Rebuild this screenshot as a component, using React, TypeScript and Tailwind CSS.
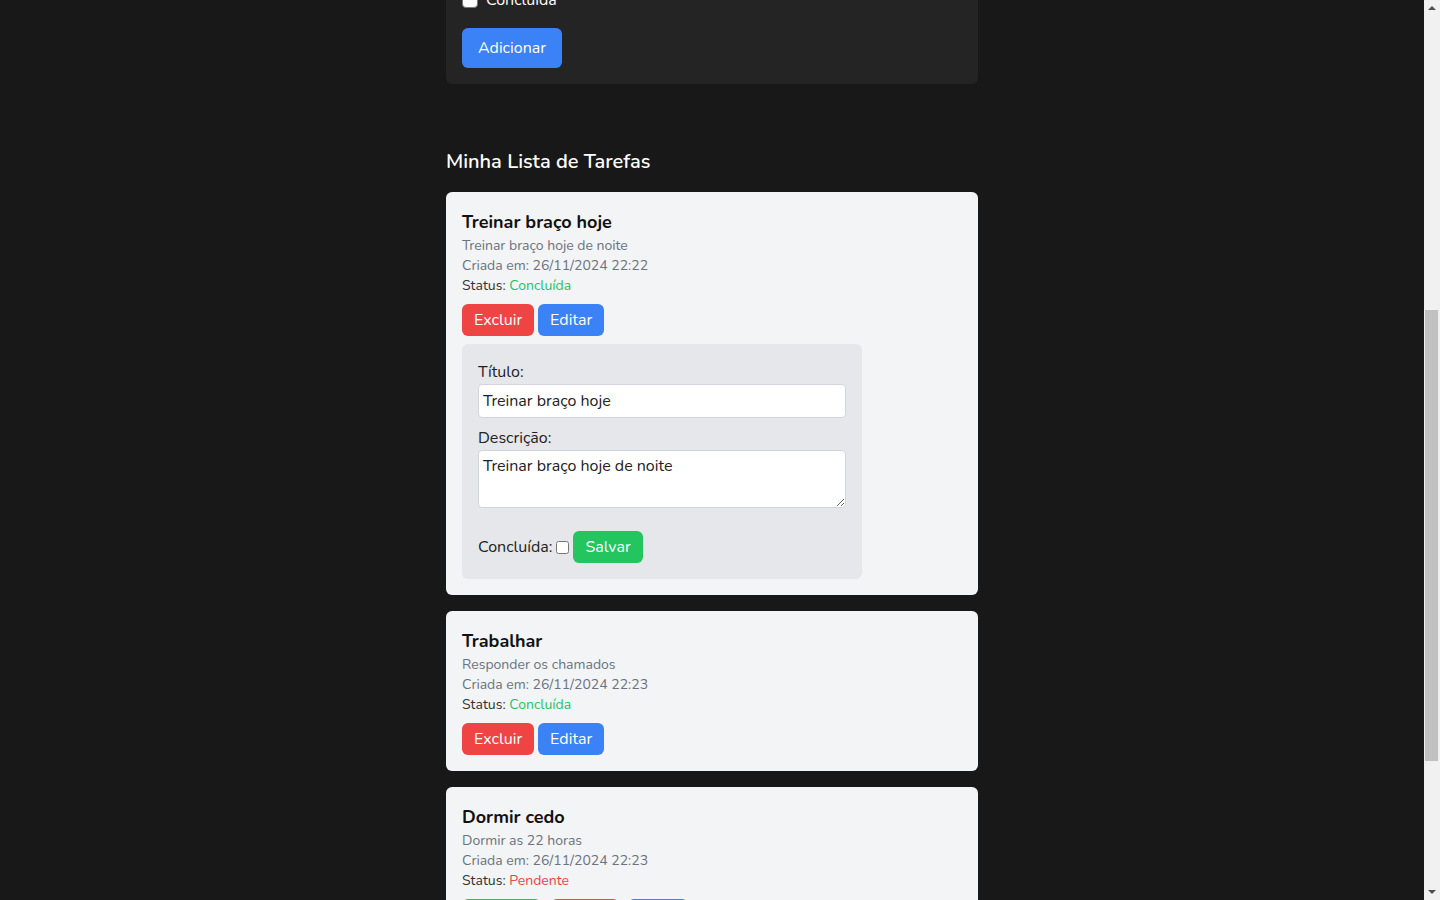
import React from "react";

type Task = {
  id: number;
  title: string;
  description: string;
  createdAt: string;
  done: boolean;
};

const tasks: Task[] = [
  { id: 1, title: "Treinar braço hoje", description: "Treinar braço hoje de noite", createdAt: "26/11/2024 22:22", done: true },
  { id: 2, title: "Trabalhar", description: "Responder os chamados", createdAt: "26/11/2024 22:23", done: true },
  { id: 3, title: "Dormir cedo", description: "Dormir as 22 horas", createdAt: "26/11/2024 22:23", done: false },
];

const font = "font-['Nunito','Lato','Noto_Sans',sans-serif]";

const EditForm = ({ task }: { task: Task }) => (
  <div className="mt-2 w-[400px] rounded-md bg-[#e5e7eb] p-4 text-base text-[#222]">
    <label className="block leading-6">Título:</label>
    <input
      defaultValue={task.title}
      className="mb-2 block h-[34px] w-full rounded border border-[#d1d5db] bg-white px-[4px] text-base text-[#222] outline-none"
    />
    <label className="block leading-6">Descrição:</label>
    <textarea
      defaultValue={task.description}
      className="block h-[58px] w-full rounded border border-[#d1d5db] bg-white px-[4px] py-[3px] text-base leading-6 text-[#222] outline-none"
    />
    <div className="mt-[23px] flex items-center">
      <span className="leading-6">Concluída:</span>
      <input type="checkbox" className="mx-1 h-[13px] w-[13px]" />
      <button className="rounded-md bg-[#22c55e] px-3 py-1 leading-6 text-white">Salvar</button>
    </div>
  </div>
);

const TaskCard = ({ task, editing }: { task: Task; editing?: boolean }) => (
  <div className="mb-4 rounded-md bg-[#f3f4f6] p-4">
    <h3 className="text-lg font-bold leading-7 text-[#111]">{task.title}</h3>
    <p className="text-sm leading-5 text-[#6b7280]">{task.description}</p>
    <p className="text-sm leading-5 text-[#6b7280]">Criada em: {task.createdAt}</p>
    <p className="text-sm leading-5 text-[#333]">
      Status:{" "}
      {task.done ? (
        <span className="text-[#22c55e]">Concluída</span>
      ) : (
        <span className="text-[#ef4444]">Pendente</span>
      )}
    </p>
    {task.done ? (
      <div className="mt-2 flex gap-1">
        <button className="rounded-md bg-[#ef4444] px-3 py-1 leading-6 text-white">Excluir</button>
        <button className="rounded-md bg-[#3b82f6] px-3 py-1 leading-6 text-white">Editar</button>
      </div>
    ) : (
      <div className="mt-2 flex">
        <button className="w-[79px] rounded-md bg-[#22c55e] py-1 leading-6 text-white">Concluir</button>
        <button className="ml-[10px] w-[68px] rounded-md bg-[#ef4444] py-1 leading-6 text-white">Excluir</button>
        <button className="ml-[9px] w-[60px] rounded-md bg-[#3b82f6] py-1 leading-6 text-white">Editar</button>
      </div>
    )}
    {editing && <EditForm task={task} />}
  </div>
);

export default function App() {
  return (
    <div className={`flex h-[900px] w-full overflow-hidden bg-[#181818] ${font}`}>
      {/* page content, scrolled view */}
      <main className="h-[900px] flex-1 overflow-hidden">
        <div className="mx-auto w-[532px]">
          {/* add form card (top part scrolled out of view) */}
          <div className="flex h-[84px] flex-col justify-end overflow-hidden">
            <div className="rounded-b-md bg-[#242424] px-4 pb-4 text-white">
              <h2 className="pt-4 text-xl font-semibold leading-7">Adicionar Tarefa</h2>
              <label className="mt-2 block">Título:</label>
              <input className="mb-2 block h-[34px] w-full rounded bg-white" />
              <label className="block">Descrição:</label>
              <textarea className="mb-2 block h-[58px] w-full rounded bg-white" />
              <label className="flex items-center gap-2 leading-6">
                <span className="h-4 w-4 rounded-sm border border-[#767676] bg-white" />
                Concluída
              </label>
              <button className="mt-4 rounded-md bg-[#3b82f6] px-4 py-2 leading-6 text-white">Adicionar</button>
            </div>
          </div>

          <h2 className="mb-4 mt-[64px] text-xl font-semibold leading-7 text-white">Minha Lista de Tarefas</h2>

          {tasks.map((t, i) => (
            <TaskCard key={t.id} task={t} editing={i === 0} />
          ))}
        </div>
      </main>

      {/* browser scrollbar */}
      <div className="relative h-[900px] w-4 bg-[#f1f1f1]">
        <div className="absolute left-1/2 top-[6px] h-0 w-0 -translate-x-1/2 border-x-[4px] border-b-[4px] border-x-transparent border-b-[#505050]" />
        <div className="absolute left-[1px] top-[310px] h-[451px] w-[13px] bg-[#c1c1c1]" />
        <div className="absolute bottom-[6px] left-1/2 h-0 w-0 -translate-x-1/2 border-x-[4px] border-t-[4px] border-x-transparent border-t-[#505050]" />
      </div>
    </div>
  );
}
